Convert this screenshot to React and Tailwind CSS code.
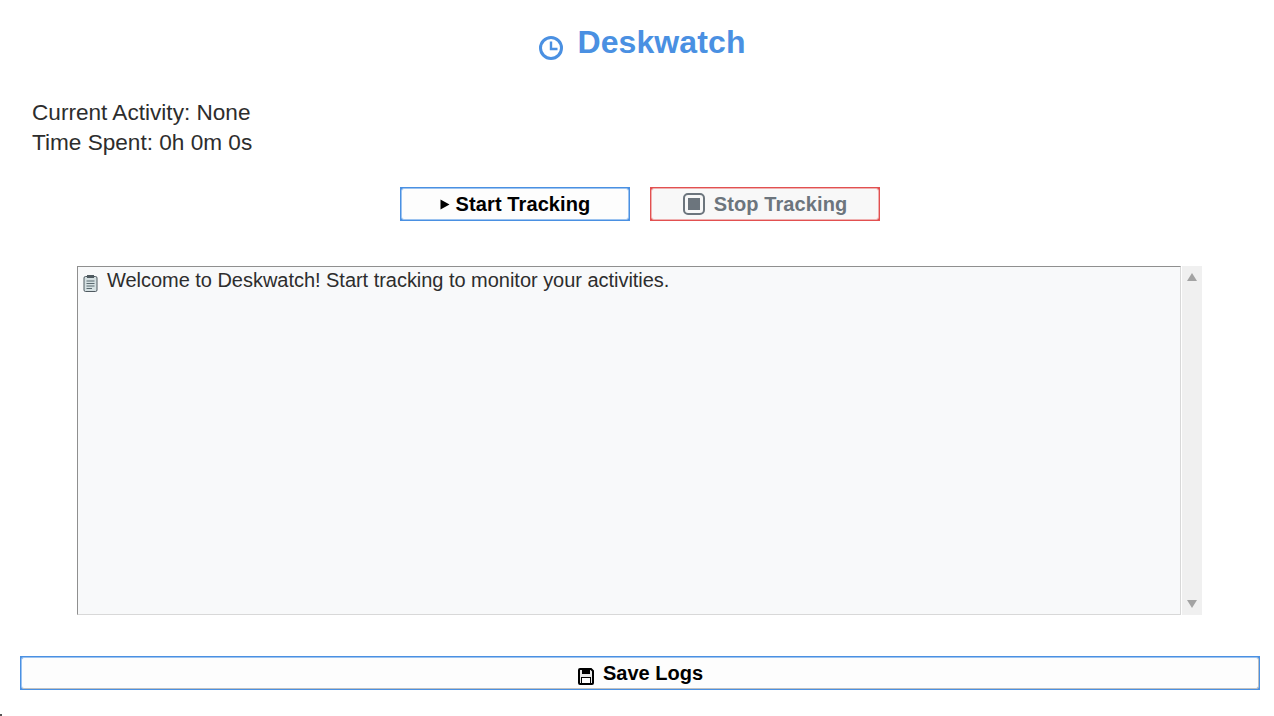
function ClockIcon() {
  return (
    <svg width="26" height="26" viewBox="0 0 26 26" fill="none" stroke="#4a90e2" className="mt-[13px]">
      <circle cx="13" cy="13" r="10.5" strokeWidth="3" />
      <path d="M13 6.5V14H19.5" strokeWidth="2.4" />
    </svg>
  );
}

function PlayIcon() {
  return (
    <svg width="10" height="11" viewBox="0 0 10 11">
      <path d="M0.5 0.5L9.5 5.5L0.5 10.5Z" fill="#000" />
    </svg>
  );
}

function StopIcon() {
  return (
    <svg width="22" height="22" viewBox="0 0 22 22" fill="none">
      <rect x="1" y="1" width="20" height="20" rx="4" stroke="#6c757d" strokeWidth="2" />
      <rect x="5" y="5" width="12" height="12" fill="#6c757d" />
    </svg>
  );
}

function ClipboardIcon() {
  return (
    <svg width="15" height="18" viewBox="0 0 15 18" fill="none" className="mt-[7px] shrink-0">
      <rect x="1" y="2.5" width="13" height="15" rx="1.5" fill="#d5e0e2" stroke="#4f5a60" />
      <rect x="4" y="1" width="7" height="3" fill="#4f5a60" />
      <path d="M3.5 7H11.5M3.5 9.5H11.5M3.5 12H11.5M3.5 14.5H9" stroke="#5a6a70" />
    </svg>
  );
}

function SaveIcon() {
  return (
    <svg width="16" height="17" viewBox="0 0 16 17" fill="none" className="mt-[6px] ml-[1px]">
      <path d="M1 2A1 1 0 0 1 2 1H13L15 3V15A1 1 0 0 1 14 16H2A1 1 0 0 1 1 15Z" fill="#e8e8e8" stroke="#000" strokeWidth="2" />
      <rect x="4" y="1" width="8" height="5" fill="#000" />
      <rect x="3.5" y="9.5" width="9" height="6" fill="#fff" stroke="#000" />
    </svg>
  );
}

function ActionButton({ edge, fill, text, gap, icon, label }) {
  return (
    <button className={`h-[34px] w-[230px] p-[1px] ${edge}`}>
      <span className={`flex h-full items-center justify-center rounded-[3px] border text-[20px] font-bold tracking-[0.1px] ${gap} ${fill} ${text}`}>
        {icon}
        {label}
      </span>
    </button>
  );
}

export default function App() {
  return (
    <div className="relative h-screen overflow-hidden bg-white font-['Liberation_Sans',Arial,sans-serif] text-[#2d2d2d]">
      <div className="flex h-screen w-[1280px] flex-col">
        <div className="flex h-[98px] items-start justify-center gap-[13px] pt-[22px] pl-[4px]">
          <ClockIcon />
          <h1 className="text-[32px] leading-[40px] font-bold tracking-[0.1px] text-[#4a90e2]">Deskwatch</h1>
        </div>

        <div className="pl-[32px] text-[22.6px] leading-[30px]">
          <div>Current Activity: None</div>
          <div>Time Spent: 0h 0m 0s</div>
        </div>

        <div className="mt-[29px] flex justify-center gap-[20px]">
          <ActionButton edge="bg-[#4a90e2]" fill="border-[#9cc3f0] bg-[#fdfdfd]" text="text-black" gap="gap-[6px]" icon={<PlayIcon />} label="Start Tracking" />
          <ActionButton edge="bg-[#e25050]" fill="border-[#efb0b0] bg-[#f8f8f8]" text="text-[#6c757d]" gap="gap-[9px]" icon={<StopIcon />} label="Stop Tracking" />
        </div>

        <div className="mt-[45px] ml-[77px] flex h-[349px] w-[1125px]">
          <div className="flex w-[1104px] items-start gap-[9px] border border-t-[#8f8f8f] border-r-[#d8d8d8] border-b-[#d8d8d8] border-l-[#8f8f8f] bg-[#f8f9fa] pl-[5px] text-[20px] leading-[26px] tracking-[-0.03px]">
            <ClipboardIcon />
            <span>Welcome to Deskwatch! Start tracking to monitor your activities.</span>
          </div>
          <div className="ml-[1px] flex w-[20px] flex-col items-center justify-between bg-[#f0f0f0] py-[7px]">
            <svg width="10" height="8" viewBox="0 0 10 8"><path d="M5 0L10 8H0Z" fill="#a3a3a3" /></svg>
            <svg width="10" height="8" viewBox="0 0 10 8"><path d="M0 0H10L5 8Z" fill="#a3a3a3" /></svg>
          </div>
        </div>

        <button className="mt-[41px] ml-[20px] h-[34px] w-[1240px] bg-[#4a90e2] p-[1px]">
          <span className="flex h-full items-center justify-center gap-[9px] rounded-[3px] border border-t-[#9cc3f0] border-r-[#c0c0c0] border-b-[#c0c0c0] border-l-[#9cc3f0] bg-[#fdfdfd] text-[20px] font-bold text-black">
            <SaveIcon />
            Save Logs
          </span>
        </button>
      </div>

      <div className="absolute bottom-0 left-0 h-[2px] w-[2px] bg-[#555]" />
    </div>
  );
}
